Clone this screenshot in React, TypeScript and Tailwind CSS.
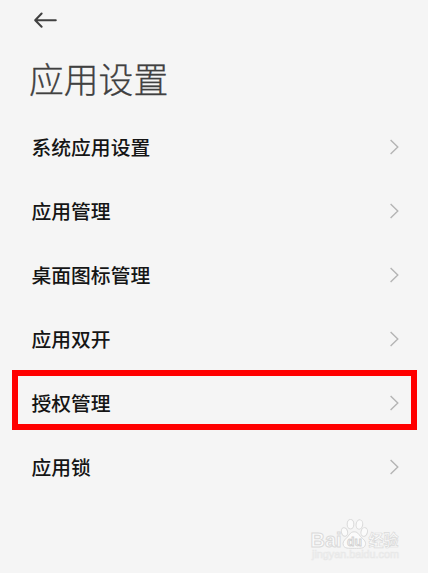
type SettingItem = {
  label: string;
  highlighted?: boolean;
};

const items: SettingItem[] = [
  { label: "系统应用设置" },
  { label: "应用管理" },
  { label: "桌面图标管理" },
  { label: "应用双开" },
  { label: "授权管理", highlighted: true },
  { label: "应用锁" },
];

function BackArrow() {
  return (
    <svg
      className="w-6 h-4"
      viewBox="0 0 24 16"
      fill="none"
      stroke="#404040"
      strokeWidth="2"
      strokeLinecap="round"
      strokeLinejoin="round"
      aria-hidden="true"
    >
      <path d="M22.8 8.3H3M8.6 1.5L2.2 8.3l6.4 6.400" />
    </svg>
  );
}

function Chevron() {
  return (
    <svg
      className="w-[9px] h-4"
      viewBox="0 0 9 16"
      fill="none"
      stroke="#b4b4b4"
      strokeWidth="1.4"
      aria-hidden="true"
    >
      <path d="M0.6 0.9L7.8 8l-7.2 7.1" />
    </svg>
  );
}

function Watermark() {
  return (
    <svg
      className="absolute left-[308px] top-[515px] w-[96px] h-[54px]"
      viewBox="0 0 96 54"
      fill="#fbfbfb"
      stroke="#dadada"
      strokeWidth="1"
      fontFamily="'Liberation Sans', 'Noto Sans CJK SC', sans-serif"
      aria-hidden="true"
    >
      <text x="2.5" y="31.5" fontSize="20.5" fontWeight="bold" textLength="31" lengthAdjust="spacingAndGlyphs">
        Bai
      </text>
      <ellipse cx="36.5" cy="17" rx="3.1" ry="4.3" transform="rotate(-15 36.5 17)" />
      <ellipse cx="42.500" cy="9.2" rx="3.3" ry="4.7" />
      <ellipse cx="51.4" cy="9.5" rx="3.3" ry="4.7" transform="rotate(10 51.4 9.5)" />
      <ellipse cx="56.2" cy="17" rx="3.2" ry="4.4" transform="rotate(15 56.2 17)" />
      <path d="M46.2 16.8c4.3 0 5 4 8 6.4 3 2.4 4 4.8 3 7.2-1.2 3.2-5 2.900-11 2.900s-9.600.3-10.800-2.900c-1-2.400.1-4.800 2.900-7.200 2.900-2.500 3.600-6.400 7.900-6.400z" />
      <text x="39" y="31" fontSize="12.5" fontWeight="bold" textLength="15" lengthAdjust="spacingAndGlyphs" fill="#f1f1f1" stroke="#d2d2d2" strokeWidth="0.8">
        du
      </text>
      <text x="60.5" y="30.5" fontSize="16" fontWeight="bold" fontFamily="'Noto Sans CJK SC', sans-serif" textLength="30" lengthAdjust="spacingAndGlyphs" strokeWidth="0.7">
        经验
      </text>
      <text x="4" y="43" fontSize="10.5" textLength="87" lengthAdjust="spacingAndGlyphs" stroke="#e8e8e8" strokeWidth="0.7">
        jingyan.baidu.com
      </text>
    </svg>
  );
}

export default function App() {
  return (
    <div className="relative w-full h-[573px] overflow-hidden bg-[#f5f5f5] font-['Noto_Sans_CJK_SC',sans-serif]">
      <header className="pl-[33px] pt-3">
        <button className="block" aria-label="返回">
          <BackArrow />
        </button>
      </header>

      <h1 className="pl-[29px] mt-[25px] h-[62px] leading-[50px] text-[34.8px] font-light text-[#404040] [-webkit-text-stroke:0.3px_#404040]">
        应用设置
      </h1>

      <ul>
        {items.map((item) => (
          <li key={item.label} className="relative flex items-center justify-between h-16 pl-[31.5px] pr-[29px]">
            <span className="text-[19.8px] leading-6 font-medium text-[#151515]">{item.label}</span>
            <Chevron />
            {item.highlighted && (
              <div className="absolute left-[11.5px] right-[11.5px] -top-px h-[60px] border-6 border-[#ff0000]" />
            )}
          </li>
        ))}
      </ul>

      <Watermark />
    </div>
  );
}
